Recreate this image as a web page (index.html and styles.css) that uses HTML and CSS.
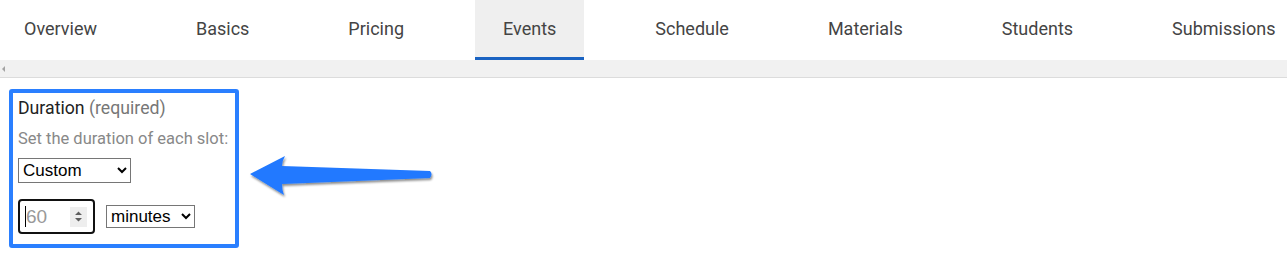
FILE: index.html
```html
<!DOCTYPE html>
<html lang="en">
<head>
    <meta charset="UTF-8">
    <title>Events</title>
    <link rel="stylesheet" href="styles.css">
</head>
<body>
    <nav class="tabs">
        <a class="tab">Overview</a>
        <a class="tab">Basics</a>
        <a class="tab">Pricing</a>
        <a class="tab active">Events</a>
        <a class="tab">Schedule</a>
        <a class="tab">Materials</a>
        <a class="tab">Students</a>
        <a class="tab">Submissions</a>
    </nav>
    <div class="scroll-strip"><span class="scroll-left"></span></div>

    <div class="content">
        <div class="field-box">
            <div class="field-label">Duration <span class="muted">(required)</span></div>
            <div class="field-help">Set the duration of each slot:</div>
            <select class="control preset">
                <option>Custom</option>
            </select>
            <div class="custom-row">
                <div class="number-input">
                    <span class="caret"></span><span class="value">60</span>
                    <span class="spin">
                        <svg width="9" height="13" viewBox="0 0 9 13"><path d="M1 5 4.5 1.5 8 5zM1 8 4.5 11.5 8 8z" fill="#5f5f5f"/></svg>
                    </span>
                </div>
                <select class="control unit">
                    <option>minutes</option>
                </select>
            </div>
        </div>

        <!-- callout arrow -->
        <svg class="callout" width="200" height="60" viewBox="0 0 200 60">
            <defs>
                <filter id="shadow" x="-10%" y="-30%" width="120%" height="160%">
                    <feDropShadow dx="1" dy="2" stdDeviation="1.2" flood-color="#000" flood-opacity="0.45"/>
                </filter>
            </defs>
            <path d="M3 27 L38 9 Q35 14 35 19 L183 24 Q186 27 183 31 L35 37 Q35 43 37 48 Z" fill="#2179ff" filter="url(#shadow)"/>
        </svg>
    </div>
</body>
</html>
```

FILE: styles.css
```css
body {
    margin: 0;
    font-family: Roboto, "Liberation Sans", Arial, sans-serif;
    background: #ffffff;
    color: #222;
}

.tabs {
    display: flex;
    gap: 43px;
    height: 60px;
    margin-left: -4px;
    white-space: nowrap;
}

.tab {
    display: flex;
    align-items: center;
    padding: 0 28px;
    font-size: 18px;
    color: #444;
    box-sizing: border-box;
    border-bottom: 3px solid transparent;
}

.tab.active {
    background: #efefef;
    border-bottom-color: #1a63c2;
}

.scroll-strip {
    height: 17px;
    background: #f1f1f1;
    border-bottom: 1px solid #dcdcdc;
    display: flex;
    align-items: center;
}

.scroll-left {
    width: 0;
    height: 0;
    margin-left: 2px;
    border-top: 3px solid transparent;
    border-bottom: 3px solid transparent;
    border-right: 3px solid #a3a3a3;
}

.content {
    position: relative;
}

.field-box {
    margin: 11px 0 0 9px;
    width: 217px;
    border: 4px solid #2a7fff;
    border-radius: 3px;
    padding: 4px 0 10px 5px;
    font-size: 16.5px;
}

.field-label {
    color: #222;
    font-size: 17.7px;
    line-height: 22px;
}

.muted {
    color: #777;
}

.field-help {
    color: #888;
    margin-top: 10px;
    line-height: 20px;
}

.control {
    font-family: "Liberation Sans", Arial, sans-serif;
    font-size: 17px;
    color: #000;
    background: #fff;
    border: 1px solid #767676;
    border-radius: 0;
}

.preset {
    margin-top: 9px;
    width: 113px;
    height: 25px;
}

.custom-row {
    display: flex;
    align-items: center;
    gap: 11px;
    margin-top: 16px;
}

.number-input {
    width: 68px;
    height: 31px;
    border: 2px solid #111;
    border-radius: 4px;
    display: flex;
    align-items: center;
    padding-left: 5px;
    box-sizing: content-box;
    font-family: "Liberation Sans", Arial, sans-serif;
    font-size: 19px;
}

.number-input .caret {
    width: 1px;
    height: 21px;
    background: #000;
}

.number-input .value {
    color: #999;
    flex: 1;
}

.spin {
    width: 17px;
    height: 20px;
    margin-right: 6px;
    background: #eeeeee;
    display: flex;
    align-items: center;
    justify-content: center;
}

.unit {
    width: 89px;
    height: 23px;
}

.callout {
    position: absolute;
    left: 247px;
    top: 58px;
}
```
